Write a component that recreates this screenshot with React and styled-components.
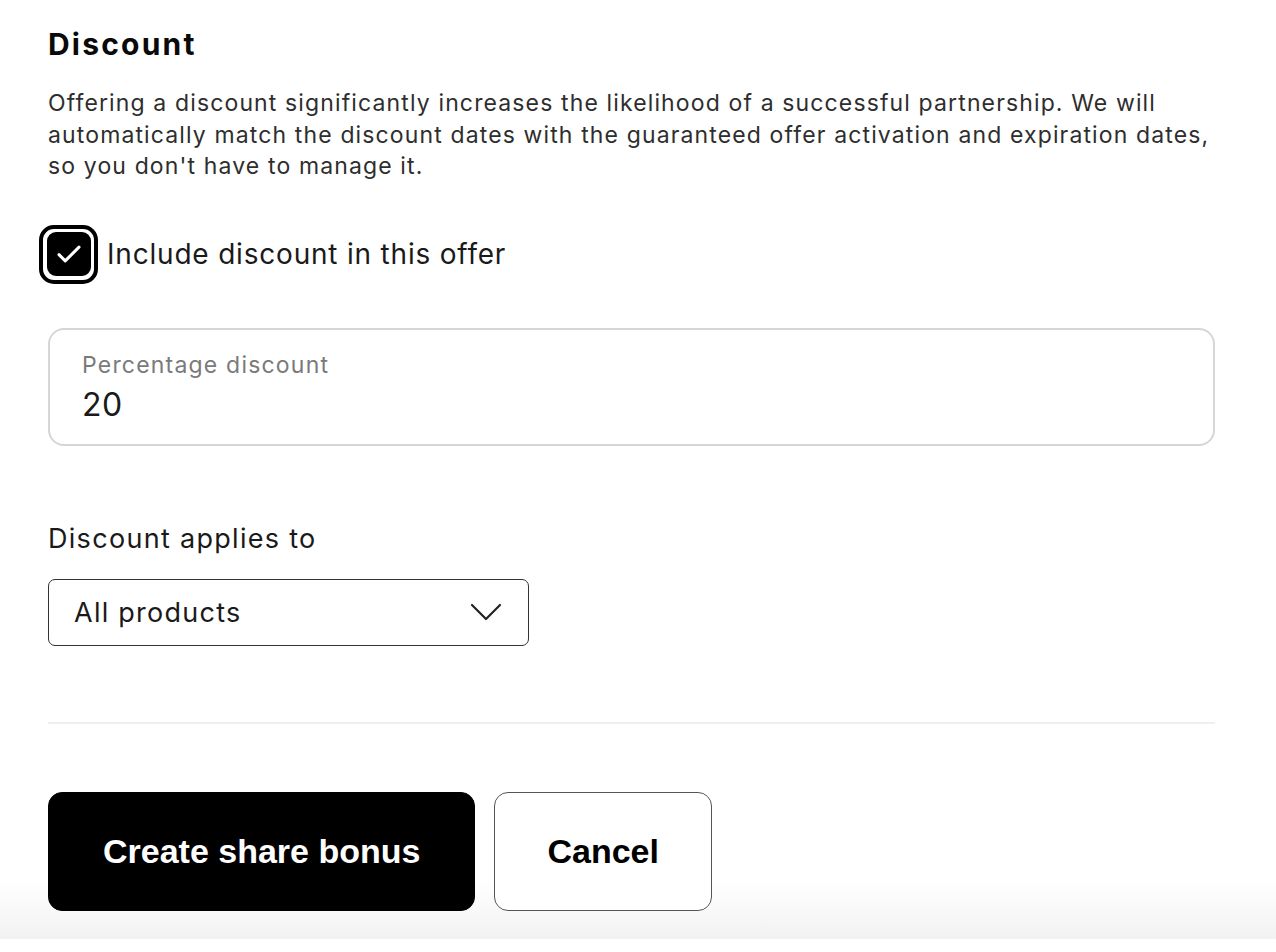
import React, { useState } from "react";
import styled, { createGlobalStyle } from "styled-components";

const GlobalStyle = createGlobalStyle`
  html, body {
    margin: 0;
    padding: 0;
    background: #ffffff;
  }
  body {
    font-family: Inter, "Noto Sans", sans-serif;
    color: #111;
  }
`;

const App = () => {
  const [checked, setChecked] = useState(true);

  return (
    <>
      <GlobalStyle />
      <Page>
        <Content>
          <Title>Discount</Title>
          <Description>
            Offering a discount significantly increases the likelihood of a
            successful partnership. We will automatically match the discount
            dates with the guaranteed offer activation and expiration dates, so
            you don't have to manage it.
          </Description>

          <CheckRow onClick={() => setChecked(!checked)}>
            <FocusRing>
              <Box $checked={checked}>
                {checked && (
                  <svg width="30" height="30" viewBox="0 0 24 24" fill="none">
                    <path
                      d="M4 12.5l5 5L20 6.5"
                      stroke="#fff"
                      strokeWidth="2.4"
                      strokeLinecap="round"
                      strokeLinejoin="round"
                    />
                  </svg>
                )}
              </Box>
            </FocusRing>
            <CheckLabel>Include discount in this offer</CheckLabel>
          </CheckRow>

          <InputBox>
            <FloatLabel>Percentage discount</FloatLabel>
            <InputValue>20</InputValue>
          </InputBox>

          <FieldLabel>Discount applies to</FieldLabel>
          <Select>
            <span>All products</span>
            <svg width="32" height="20" viewBox="0 0 32 20" fill="none">
              <path
                d="M2 3l14 14L30 3"
                stroke="#222"
                strokeWidth="2.2"
                strokeLinecap="round"
                strokeLinejoin="round"
              />
            </svg>
          </Select>

          <Divider />
        </Content>

        <Footer>
          <Actions>
            <Button $primary>Create share bonus</Button>
            <Button>Cancel</Button>
          </Actions>
        </Footer>
      </Page>
    </>
  );
};

export default App;

const Page = styled.div`
  width: 1276px;
  min-height: 952px;
  display: flex;
  flex-direction: column;
`;

const Content = styled.div`
  padding: 24px 61px 0 48px;
  display: flex;
  flex-direction: column;
`;

const Title = styled.h2`
  margin: 0;
  font-size: 30px;
  font-weight: 700;
  line-height: 40px;
  color: #0a0a0a;
  letter-spacing: 2.2px;
`;

const Description = styled.p`
  margin: 24px 0 0;
  font-size: 23px;
  line-height: 31.5px;
  letter-spacing: 1.13px;
  color: #2e2e2e;
`;

const CheckRow = styled.label`
  margin-top: 42px;
  margin-left: -9px;
  display: flex;
  align-items: center;
  gap: 9px;
  cursor: pointer;
`;

const FocusRing = styled.span`
  width: 59px;
  height: 59px;
  box-sizing: border-box;
  border: 4px solid #000;
  border-radius: 15px;
  display: flex;
  align-items: center;
  justify-content: center;
`;

const Box = styled.span`
  width: 44px;
  height: 44px;
  box-sizing: border-box;
  border-radius: 9px;
  border: 2px solid #000;
  background: ${(p) => (p.$checked ? "#000" : "#fff")};
  display: flex;
  align-items: center;
  justify-content: center;
`;

const CheckLabel = styled.span`
  font-size: 28px;
  letter-spacing: 0.8px;
  color: #1a1a1a;
`;

const InputBox = styled.div`
  margin-top: 44px;
  height: 118px;
  box-sizing: border-box;
  border: 2px solid #d6d6d6;
  border-radius: 16px;
  padding: 19px 32px 0;
  display: flex;
  flex-direction: column;
`;

const FloatLabel = styled.span`
  font-size: 23px;
  line-height: 32px;
  letter-spacing: 1.2px;
  color: #7a7a7a;
`;

const InputValue = styled.span`
  margin-top: 2px;
  font-size: 32px;
  line-height: 44px;
  letter-spacing: 0.6px;
  color: #1a1a1a;
`;

const FieldLabel = styled.div`
  margin-top: 75px;
  font-size: 27px;
  line-height: 36px;
  letter-spacing: 1.3px;
  color: #1a1a1a;
`;

const Select = styled.div`
  margin-top: 22px;
  width: 481px;
  height: 67px;
  box-sizing: border-box;
  border: 1.5px solid #333;
  border-radius: 7px;
  padding: 0 26px 0 25px;
  display: flex;
  align-items: center;
  justify-content: space-between;
  font-size: 27px;
  letter-spacing: 1.25px;
  color: #1a1a1a;
`;

const Divider = styled.hr`
  margin: 76px 0 0;
  border: none;
  height: 2px;
  background: #efefef;
`;

const Footer = styled.div`
  margin-top: 68px;
  padding: 0 48px 28px;
  background: linear-gradient(to bottom, #ffffff 0%, #ffffff 60%, #f2f2f2 100%);
`;

const Actions = styled.div`
  display: flex;
  gap: 19px;
`;

const Button = styled.button`
  height: 119px;
  box-sizing: border-box;
  padding: 0 ${(p) => (p.$primary ? "54px" : "52px")};
  border-radius: 14px;
  border: 1.5px solid ${(p) => (p.$primary ? "#000" : "#555")};
  background: ${(p) => (p.$primary ? "#000" : "#fff")};
  color: ${(p) => (p.$primary ? "#fff" : "#000")};
  font-family: "Liberation Sans", Arial, sans-serif;
  font-weight: 700;
  font-size: 34px;
  cursor: pointer;
`;
